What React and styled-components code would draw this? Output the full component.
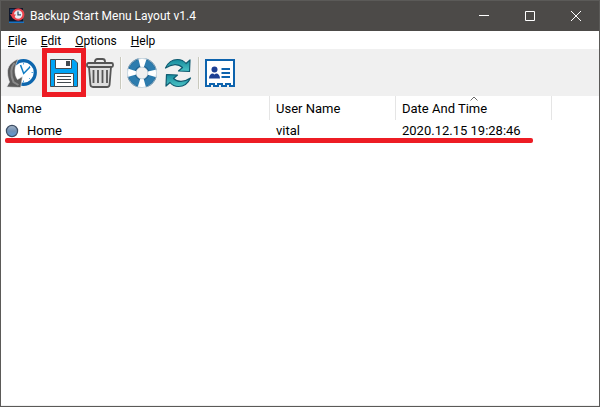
import React from "react";
import styled, { createGlobalStyle } from "styled-components";

const GlobalStyle = createGlobalStyle`
  * {
    margin: 0;
    padding: 0;
    box-sizing: border-box;
  }
  body {
    background: #ffffff;
    font-family: Roboto, "Noto Sans", sans-serif;
    font-size: 13px;
    color: #000000;
  }
  button {
    border: none;
    background: none;
    font: inherit;
    color: inherit;
  }
`;

const Window = styled.div`
  display: flex;
  flex-direction: column;
  min-height: 100vh;
  border: 1px solid #5b5a58;
  background: #ffffff;
`;

const TitleBar = styled.header`
  display: flex;
  align-items: center;
  height: 30px;
  padding-left: 8px;
  background: #4c4a48;
  color: #ffffff;
`;

const Title = styled.h1`
  flex: 1;
  padding-left: 5px;
  font-size: 12px;
  font-weight: 400;
  white-space: nowrap;
`;

const WindowButton = styled.button`
  display: flex;
  align-items: center;
  justify-content: center;
  width: 46px;
  height: 30px;
`;

const MenuBar = styled.nav`
  display: flex;
  height: 18px;
  font-size: 12px;
`;

const MenuItem = styled.button`
  padding: 0 7px;
  line-height: 20px;

  &::first-letter {
    text-decoration: underline;
  }
`;

const Toolbar = styled.div`
  display: flex;
  align-items: center;
  height: 47px;
  padding-left: 3px;
  background: #f0f0f0;
`;

const ToolButton = styled.button`
  position: relative;
  display: flex;
  align-items: center;
  justify-content: center;
  width: 36px;
  height: 37px;
`;

const Separator = styled.span`
  width: 2px;
  height: 32px;
  margin: 0 2px;
  border-left: 1px solid #c9c9bd;
  border-right: 1px solid #fafafa;
`;

/* red frame over the save button */
const MarkBox = styled.span`
  position: absolute;
  inset: -6px -4px;
  z-index: 1;
  border: 5px solid #ed1c24;
`;

const List = styled.main`
  flex: 1;
  border-bottom: 1px solid #f0f0f0;
`;

const Table = styled.table`
  position: relative;
  width: 100%;
  table-layout: fixed;
  border-collapse: separate;
  border-spacing: 0;
`;

const Column = styled.col`
  width: ${(props) => props.$width};
`;

const Th = styled.th`
  position: relative;
  height: 24px;
  padding: 0 6px;
  border-right: 1px solid ${(props) => (props.$last ? "transparent" : "#e5e5e5")};
  font-weight: 400;
  text-align: left;
  white-space: nowrap;
`;

const SortArrow = styled.svg`
  position: absolute;
  top: 0;
  left: 50%;
  transform: translateX(-50%);
`;

const Td = styled.td`
  height: 21px;
  padding: 0 6px;
  white-space: nowrap;
`;

const NameCell = styled.div`
  display: flex;
  align-items: center;
  gap: 8px;
  margin-left: -2px;
`;

/* red underline below the first row */
const MarkLine = styled.span`
  position: absolute;
  top: 42px;
  left: 4px;
  width: 528px;
  height: 5px;
  border-radius: 2px;
  background: #ed1c24;
`;

function AppIcon() {
  return (
    <svg width="16" height="16" viewBox="0 0 16 16" aria-hidden="true">
      <rect width="14" height="15" fill="#10182c" />
      <path d="M1 1h4v4H1z" fill="#163c68" />
      <path d="M0 13.5h15V15H0z" fill="#1673c4" />
      <circle cx="9.2" cy="6.5" r="5.2" fill="#e8eef4" stroke="#e8434c" strokeWidth="2.1" />
      <path d="M1 6l3.2 5L7 6.5z" fill="#e8434c" />
      <path d="M9 3.5v3.3h3" fill="none" stroke="#28566f" strokeWidth="1.3" />
    </svg>
  );
}

function RestoreIcon() {
  return (
    <svg width="32" height="32" viewBox="0 0 32 32" aria-hidden="true">
      <circle cx="17.5" cy="15.5" r="11.8" fill="#ffffff" stroke="#0d66ae" strokeWidth="3.2" />
      <path d="M17.5 5.5v2M27.5 15.5h-2M17.5 25.5v-2M24.5 8.5l-1.4 1.4M24.5 22.5l-1.4-1.4" stroke="#59a4dc" />
      <path d="M14.5 8l3.2 8.5 6.300-6.500" fill="none" stroke="#0d7cc4" strokeWidth="1.5" />
      <path
        d="M12.500 2C5 4.500 1 10 1.500 16c.2 4 1 6.500 2 9L.7 30l14 .5 1.800-11-5 3C8 17.500 8 9 12.500 2z"
        fill="#5b5b5b"
        stroke="#f0f0f0"
        strokeWidth="0.6"
      />
      <path d="M8.500 6C4.500 11 4.500 18 7.500 25l5 3" fill="none" stroke="#8a8a8a" strokeWidth="2" />
    </svg>
  );
}

function SaveIcon() {
  return (
    <svg width="28" height="28" viewBox="0 0 28 28" aria-hidden="true">
      <path d="M.5.5h23.500l3.500 3.500v23.500H.5z" fill="#00a4f5" stroke="#424a50" />
      <path d="M5.500.5h16v9h-16z" fill="#ffffff" stroke="#424a50" />
      <path d="M16 2h4v5h-4z" fill="#424a50" />
      <path d="M4.500 14.500h19v13h-19z" fill="#ffffff" stroke="#424a50" />
      <path d="M7 17.500h14M7 20.500h14M7 23.500h14" stroke="#424a50" />
    </svg>
  );
}

function TrashIcon() {
  return (
    <svg width="28" height="30" viewBox="0 0 28 30" fill="none" stroke="#555555" strokeWidth="1.8" strokeLinejoin="round" aria-hidden="true">
      <path d="M9 5V3.5C9 2 10 1 11.5 1h5C18 1 19 2 19 3.5V5" />
      <path d="M3 9l1.4 17.5C4.5 28 5.5 29 7 29h14c1.5 0 2.5-1 2.6-2.5L25 9" fill="#dedede" />
      <rect x="1" y="5" width="26" height="4" rx="1.5" fill="#dedede" />
      <path d="M7.500 12v13M12 12v13M16.500 12v13M21 12v13" />
    </svg>
  );
}

function HelpIcon() {
  return (
    <svg width="30" height="30" viewBox="0 0 30 30" fill="none" aria-hidden="true">
      <circle cx="15" cy="15" r="10.5" stroke="#1b5e8b" strokeWidth="9" />
      <circle cx="15" cy="15" r="10.5" stroke="#2d7cae" strokeWidth="6.5" />
      <circle
        cx="15"
        cy="15"
        r="10.5"
        stroke="#ffffff"
        strokeWidth="9"
        strokeDasharray="6 10.493"
        strokeDashoffset="3"
      />
      <circle cx="15" cy="15" r="14.6" stroke="#b9cad6" strokeWidth="0.7" />
      <circle cx="15" cy="15" r="6" stroke="#b9cad6" strokeWidth="0.5" />
    </svg>
  );
}

function RefreshIcon() {
  return (
    <svg width="28" height="30" viewBox="0 0 28 30" aria-hidden="true">
      <defs>
        <linearGradient id="teal" x1="0" y1="0" x2="0" y2="1">
          <stop offset="0" stopColor="#168a9c" />
          <stop offset="1" stopColor="#4cc4c6" />
        </linearGradient>
      </defs>
      <g fill="url(#teal)" stroke="#0e5a70" strokeWidth="1.2" strokeLinejoin="round">
        <path d="M1.5 10C4 4.500 8.500 1.500 13.500 1.500c3.500 0 6.500 1.500 8.500 4l4-3.500-.5 11.500-11-.5 4-3.500C14.500 5.500 8 5.500 1.500 10z" />
        <path d="M26.500 20c-2.500 5.500-7 8.500-12 8.500-3.500 0-6.500-1.500-8.500-4L2 28l.5-11.500 11 .5-4 3.500c4 4 10.500 4 17-.5z" />
      </g>
    </svg>
  );
}

function UserIcon() {
  return (
    <svg width="30" height="28" viewBox="0 0 30 28" aria-hidden="true">
      <path
        d="M1 1h28v26h-4v-2h-4v2h-4v-2h-4v2H9v-2H5v2H1z"
        fill="#ffffff"
        stroke="#0d63ad"
        strokeWidth="2"
      />
      <circle cx="9.5" cy="10.5" r="3" fill="#1c3f94" />
      <path d="M4 19.5c0-3 1.5-5 4-5l1.5 1 1.5-1c2.500 0 4 2 4 5z" fill="#1c3f94" />
      <path d="M16.500 10h8.500M16.500 14h8.500M16.500 18h8.500" stroke="#0d63ad" strokeWidth="2" />
    </svg>
  );
}

function BallIcon() {
  return (
    <svg width="14" height="14" viewBox="0 0 14 14" aria-hidden="true">
      <defs>
        <linearGradient id="ball" x1="0" y1="0" x2="0" y2="1">
          <stop offset="0" stopColor="#a9b7c8" />
          <stop offset="0.5" stopColor="#6f8fb4" />
          <stop offset="1" stopColor="#5b9bd8" />
        </linearGradient>
      </defs>
      <circle cx="7" cy="7" r="5.6" fill="url(#ball)" stroke="#3e4f66" strokeWidth="1.2" />
    </svg>
  );
}

const menus = ["File", "Edit", "Options", "Help"];

const backups = [{ name: "Home", user: "vital", date: "2020.12.15 19:28:46" }];

export default function App() {
  return (
    <Window>
      <GlobalStyle />
      <TitleBar>
        <AppIcon />
        <Title>Backup Start Menu Layout v1.4</Title>
        <WindowButton aria-label="Minimize">
          <svg width="10" height="10" viewBox="0 0 10 10" stroke="#ffffff">
            <path d="M0 4.5h10" />
          </svg>
        </WindowButton>
        <WindowButton aria-label="Maximize">
          <svg width="10" height="10" viewBox="0 0 10 10" fill="none" stroke="#ffffff">
            <path d="M.5.5h9v9h-9z" />
          </svg>
        </WindowButton>
        <WindowButton aria-label="Close">
          <svg width="10" height="10" viewBox="0 0 10 10" stroke="#ffffff">
            <path d="M0 0l10 10M10 0L0 10" />
          </svg>
        </WindowButton>
      </TitleBar>

      <MenuBar>
        {menus.map((menu) => (
          <MenuItem key={menu}>{menu}</MenuItem>
        ))}
      </MenuBar>

      <Toolbar>
        <ToolButton aria-label="Restore">
          <RestoreIcon />
        </ToolButton>
        <Separator />
        <ToolButton aria-label="Save">
          <SaveIcon />
          <MarkBox />
        </ToolButton>
        <ToolButton aria-label="Delete">
          <TrashIcon />
        </ToolButton>
        <Separator />
        <ToolButton aria-label="Help">
          <HelpIcon />
        </ToolButton>
        <ToolButton aria-label="Refresh">
          <RefreshIcon />
        </ToolButton>
        <Separator />
        <ToolButton aria-label="Contact">
          <UserIcon />
        </ToolButton>
      </Toolbar>

      <List>
        <Table>
          <colgroup>
            <Column $width="269px" />
            <Column $width="126px" />
            <Column $width="156px" />
            <Column $width="auto" />
          </colgroup>
          <thead>
            <tr>
              <Th>Name</Th>
              <Th>User Name</Th>
              <Th>
                Date And Time
                <SortArrow width="9" height="5" viewBox="0 0 9 5" fill="none" stroke="#6b6b6b">
                  <path d="M1 4.5l3.5-3.5L8 4.5" />
                </SortArrow>
              </Th>
              <Th $last />
            </tr>
          </thead>
          <tbody>
            {backups.map((backup) => (
              <tr key={backup.date}>
                <Td>
                  <NameCell>
                    <BallIcon />
                    {backup.name}
                  </NameCell>
                </Td>
                <Td>{backup.user}</Td>
                <Td>
                  {backup.date}
                  <MarkLine />
                </Td>
                <Td />
              </tr>
            ))}
          </tbody>
        </Table>
      </List>
    </Window>
  );
}
